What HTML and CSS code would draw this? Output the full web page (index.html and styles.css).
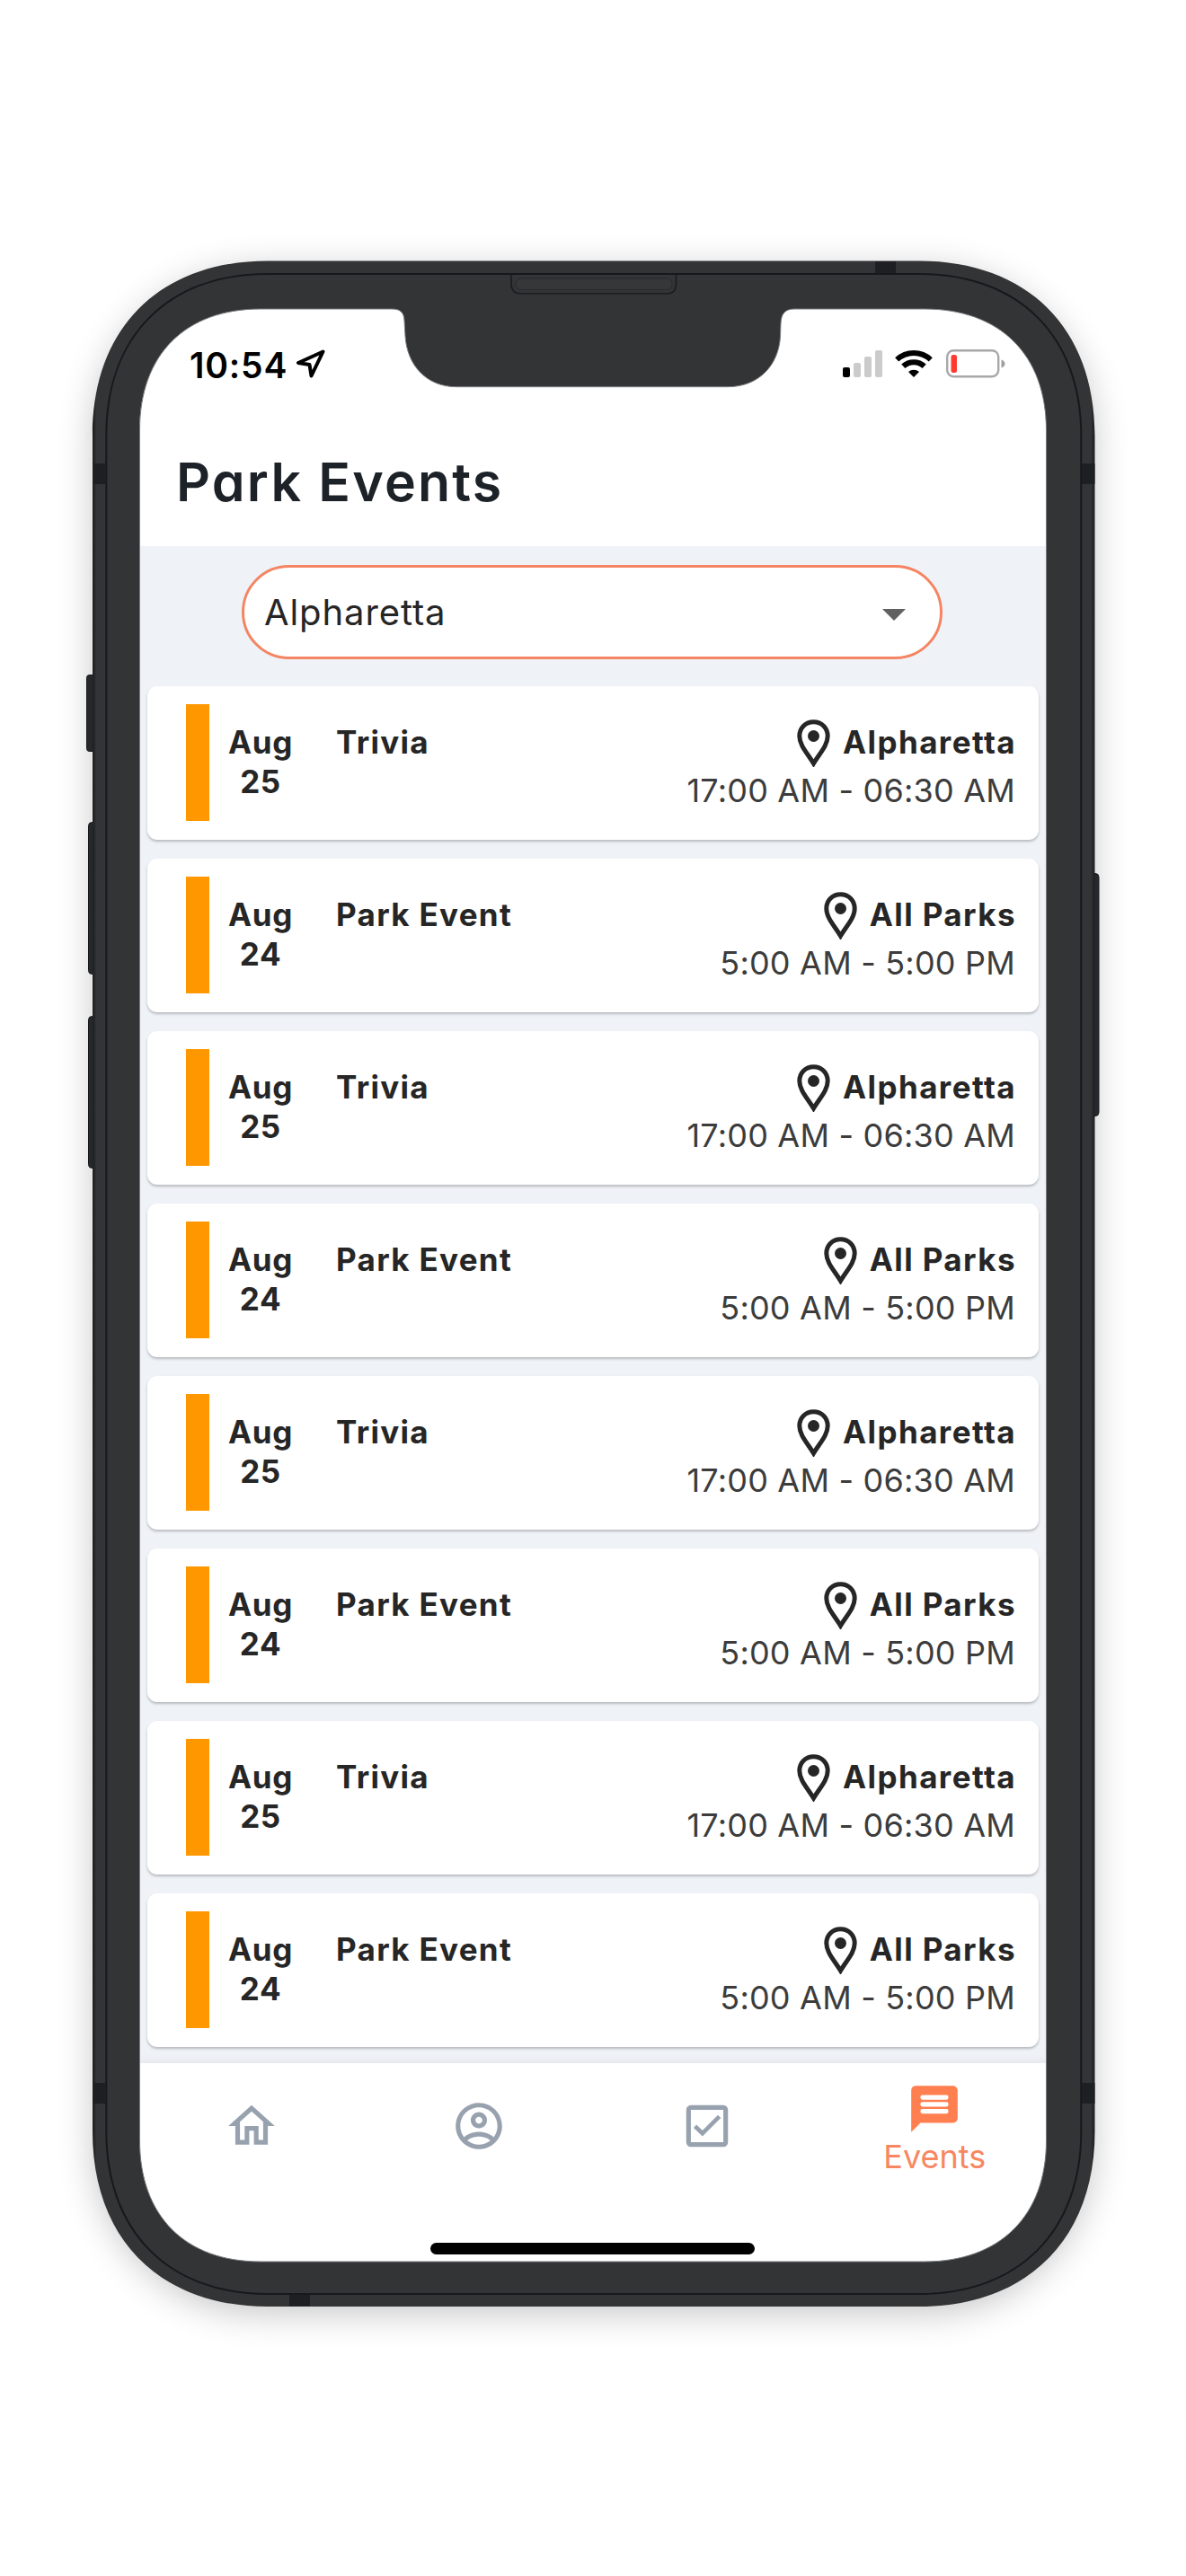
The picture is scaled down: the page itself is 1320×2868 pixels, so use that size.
FILE: index.html
```html
<!DOCTYPE html>
<html lang="en">
  <head>
    <meta charset="UTF-8" />
    <meta name="viewport" content="width=device-width, initial-scale=1.0" />
    <title>Park Events</title>
    <link rel="stylesheet" href="styles.css">
  </head>
  <body>
    <div class="stage">
      <div class="phone-shadow"></div>

      <main class="screen">
        <!-- Status bar -->
        <div class="status-bar">
          <span class="time">10:54</span>
          <svg class="location" viewBox="0 0 32 32">
            <path d="M29.500 2.500 L2 15 L14.500 17 L16.500 29.500 Z" fill="none" stroke="#000" stroke-width="4" stroke-linejoin="round" />
          </svg>
          <div class="signal">
            <i class="on"></i><i></i><i></i><i></i>
          </div>
          <svg class="wifi" viewBox="0 0 42 32">
            <g fill="none" stroke="#000" stroke-width="6">
              <path d="M2.200 11.400 A27.500 27.500 0 0 1 39.800 11.400" />
              <path d="M9.300 18.800 A17 17 0 0 1 32.700 18.800" />
            </g>
            <path d="M15 25 A9 9 0 0 1 27 25 L21 31 Z" />
          </svg>
          <svg class="battery" viewBox="0 0 66 32">
            <rect x="1.200" y="1.200" width="57" height="29" rx="7" fill="none" stroke="#a8a8a8" stroke-width="2.400" />
            <rect x="5.500" y="6" width="6.500" height="20" rx="2.500" fill="#ff3b30" />
            <path d="M61.500 11.500 Q65.500 13 65.500 16 Q65.500 19 61.500 20.500 Z" fill="#a0a0a0" />
          </svg>
        </div>

        <header class="app-bar">
          <h1>Park Events</h1>
        </header>

        <section class="content">
          <div class="park-select">
            <span>Alpharetta</span>
            <svg class="caret" viewBox="0 0 26 13"><path d="M0 0h26L13 13z" /></svg>
          </div>
          <div class="event-list" id="event-list"></div>
        </section>

        <!-- Bottom navigation -->
        <nav class="nav-bar">
          <div class="nav-item">
            <svg viewBox="0 0 24 24"><path d="M12 5.690l5 4.500V18h-2v-6H9v6H7v-7.810l5-4.500M12 3L2 12h3v8h6v-6h2v6h6v-8h3L12 3z" /></svg>
          </div>
          <div class="nav-item">
            <svg viewBox="0 0 24 24"><path d="M12 2C6.480 2 2 6.480 2 12s4.480 10 10 10 10-4.480 10-10S17.520 2 12 2zM7.070 18.280c.43-.9 3.050-1.780 4.930-1.780s4.510.88 4.930 1.780C15.570 19.360 13.860 20 12 20s-3.570-.64-4.930-1.720zm11.290-1.450c-1.430-1.740-4.900-2.330-6.360-2.330s-4.930.59-6.360 2.330C4.620 15.490 4 13.820 4 12c0-4.410 3.590-8 8-8s8 3.590 8 8c0 1.820-.62 3.490-1.640 4.830zM12 6c-1.940 0-3.500 1.560-3.500 3.500S10.060 13 12 13s3.500-1.560 3.500-3.500S13.940 6 12 6zm0 5c-.83 0-1.500-.67-1.500-1.500S11.170 8 12 8s1.500.67 1.500 1.500S12.830 11 12 11z" /></svg>
          </div>
          <div class="nav-item">
            <svg viewBox="0 0 24 24">
              <g fill="none" stroke="#98a2af" stroke-width="2">
                <rect x="4" y="4" width="16" height="16" rx="1" />
                <path stroke-width="1.800" d="M6.800 12.100 L10 15.200 L17.300 7.900" />
              </g>
            </svg>
          </div>
          <div class="nav-item active">
            <svg viewBox="0 0 24 24">
              <path d="M20 2H4c-1.100 0-1.990.9-1.990 2L2 22l4-4h14c1.100 0 2-.9 2-2V4c0-1.100-.9-2-2-2z" />
              <g fill="#fff">
                <rect x="6" y="6" width="12" height="2" rx=".8" />
                <rect x="6" y="9" width="12" height="2" rx=".8" />
                <rect x="6" y="12" width="12" height="2" rx=".8" />
              </g>
            </svg>
            <span>Events</span>
          </div>
        </nav>
        <div class="home-indicator"></div>
      </main>

      <!-- Phone frame, lies over the screen -->
      <svg class="device" viewBox="0 0 1320 2868">
        <defs>
          <linearGradient id="rim" x1="0" x2="1" y1="0" y2="0">
            <stop offset="0" stop-color="#1c1d20" />
            <stop offset=".004" stop-color="#333436" />
            <stop offset=".996" stop-color="#333436" />
            <stop offset="1" stop-color="#1c1d20" />
          </linearGradient>
        </defs>
        <!-- side buttons -->
        <g fill="#27282b" stroke="#18191c" stroke-width="1">
          <rect x="96.500" y="751.500" width="12" height="85" rx="3" />
          <rect x="98.500" y="915.500" width="12" height="169" rx="4" />
          <rect x="98.500" y="1131.500" width="12" height="169" rx="4" />
          <rect x="1211" y="972.500" width="12" height="270" rx="4" />
        </g>
        <!-- body with the screen and notch cut out -->
        <path fill="url(#rim)" fill-rule="evenodd" d="M103 485 C103 365 178 290.500 298 290.500 H1023 C1143 290.500 1218.500 365 1218.500 485 V2373 C1218.500 2493 1143 2568 1023 2568 H298 C178 2568 103 2493 103 2373 Z
          M155.500 479 C155.500 395 206 344 290 344 H436 C446 344 449.500 348 450 357 L451 374 C453 407 475 430.700 508 430.700 H810 C844 430.700 867 407 868.500 374 L869 360 C869.500 349 874 344 884 344 H1029 C1113 344 1164.500 395 1164.500 479 V2383 C1164.500 2467 1113 2518 1029 2518 H290 C206 2518 155.500 2467 155.500 2383 Z" />
        <path fill="none" stroke="#7c7d80" stroke-width="1" d="M155.500 479 C155.500 395 206 344 290 344 H436 C446 344 449.500 348 450 357 L451 374 C453 407 475 430.700 508 430.700 H810 C844 430.700 867 407 868.500 374 L869 360 C869.500 349 874 344 884 344 H1029 C1113 344 1164.500 395 1164.500 479 V2383 C1164.500 2467 1113 2518 1029 2518 H290 C206 2518 155.500 2467 155.500 2383 Z" />
        <path fill="none" stroke="#17181b" stroke-width="2" d="M118.300 485 C118.300 374 187 305 298 305 H1023 C1134 305 1203.300 374 1203.300 485 V2373 C1203.300 2484 1134 2554 1023 2554 H298 C187 2554 118.300 2484 118.300 2373 Z" />
        <!-- antenna bands -->
        <g fill="#1e1f22">
          <rect x="103" y="516" width="15" height="23" />
          <rect x="1204" y="516" width="14.500" height="23" />
          <rect x="974" y="291" width="23" height="13" />
          <rect x="103" y="2319" width="15" height="23" />
          <rect x="1204" y="2319" width="14.500" height="23" />
          <rect x="322" y="2555" width="23" height="12.500" />
        </g>
        <!-- speaker -->
        <path fill="none" stroke="#1b1c1f" stroke-width="1.600" d="M569 305 V316 Q569 327 580 327 H742 Q752.500 327 752.500 316 V305" />
        <rect x="574" y="310" width="174" height="12.500" rx="6" fill="#363739" stroke="#28292b" />
      </svg>
    </div>

    <script>
      const events = [
        { month: "Aug", day: "25", name: "Trivia", park: "Alpharetta", start: "17:00 AM", end: "06:30 AM" },
        { month: "Aug", day: "24", name: "Park Event", park: "All Parks", start: "5:00 AM", end: "5:00 PM" },
      ];
      const list = document.getElementById("event-list");
      // the feed repeats both events four times
      list.innerHTML = [...events, ...events, ...events, ...events]
        .map((item) => {
          return `
          <article class="card">
            <div class="marker"></div>
            <div class="date">${item.month}<br>${item.day}</div>
            <div class="name">${item.name}</div>
            <div class="info">
              <div class="park">
                <svg class="pin" viewBox="0 0 37 53">
                  <path d="M18.500 2.800 C9.500 2.800 2.800 9.500 2.800 18.500 C2.800 29 12 38 18.500 49 C25 38 34.200 29 34.200 18.500 C34.200 9.500 27.500 2.800 18.500 2.800 Z" fill="none" stroke="#262626" stroke-width="5" />
                  <circle cx="18.500" cy="18.500" r="6.500" fill="#262626" />
                </svg>
                <span>${item.park}</span>
              </div>
              <div class="hours">${item.start} <span class="dash">-</span> ${item.end}</div>
            </div>
          </article>`;
        })
        .join("");
    </script>
  </body>
</html>
```
FILE: styles.css
```css
* {
  box-sizing: border-box;
}
body {
  margin: 0;
  background: #fff;
  font-family: Inter, "Liberation Sans", sans-serif;
  color: #262626;
}
svg {
  display: block;
}
.stage {
  position: relative;
  width: 1320px;
  height: 2868px;
  padding: 344px 155px 0;
  overflow: hidden;
}
.phone-shadow {
  position: absolute;
  left: 105px;
  top: 293px;
  width: 1111px;
  height: 2273px;
  border-radius: 185px;
  box-shadow: 0 8px 40px rgba(0, 0, 0, 0.24);
}
.device {
  position: absolute;
  left: 0;
  top: 0;
  width: 1320px;
  height: 2868px;
}
.screen {
  position: relative;
  display: flex;
  flex-direction: column;
  width: 1010px;
  height: 2174px;
  border-radius: 110px;
  overflow: hidden;
  background: #fff;
}

/* status bar */
.status-bar {
  display: flex;
  align-items: flex-end;
  height: 77px;
  padding-left: 56px;
  flex-shrink: 0;
}
.time {
  width: 119px;
  font-size: 39px;
  font-weight: 600;
  line-height: 28px;
  letter-spacing: 0.8px;
  color: #000;
}
.location {
  width: 32px;
  height: 32px;
}
.signal {
  display: flex;
  align-items: flex-end;
  gap: 4px;
  margin-left: 576px;
  padding-bottom: 1px;
}
.signal i {
  width: 8px;
  height: 16px;
  border-radius: 2px;
  background: #cbcbcb;
}
.signal i.on {
  height: 11px;
  background: #000;
}
.signal i:nth-child(3) {
  height: 23px;
}
.signal i:nth-child(4) {
  height: 30px;
}
.wifi {
  width: 42px;
  height: 32px;
  margin-left: 14px;
}
.battery {
  width: 66px;
  height: 32px;
  margin-left: 15px;
}

/* title */
.app-bar {
  height: 187px;
  padding: 80px 0 0 41px;
  flex-shrink: 0;
}
.app-bar h1 {
  margin: 0;
  font-size: 59px;
  line-height: 72px;
  font-weight: 600;
  letter-spacing: 2.2px;
  font-feature-settings: "cv11";
  color: #1d2228;
}

.content {
  flex: 1;
  padding: 21px 9px 0;
  background: #eff3f8;
}
.park-select {
  display: flex;
  align-items: center;
  justify-content: space-between;
  width: 780px;
  height: 105px;
  margin: 0 auto 30px 105px;
  padding: 0 38px 0 22px;
  border: 3px solid #f58462;
  border-radius: 53px;
  background: #fff;
  font-size: 40px;
  letter-spacing: 0.9px;
}
.caret {
  width: 26px;
  height: 13px;
  margin-top: 6px;
  fill: #616161;
}

/* event cards */
.event-list {
  display: flex;
  flex-direction: column;
  gap: 21px;
}
.card {
  display: flex;
  height: 171px;
  padding: 20px 26px 0 43px;
  border-radius: 11px;
  background: #fff;
  box-shadow: 0 2px 3px rgba(0, 0, 0, 0.24);
}
.marker {
  width: 26px;
  height: 130px;
  background: #ff9800;
}
.date {
  width: 72px;
  margin: 20px 0 0 21px;
  text-align: center;
}
.date,
.name,
.park {
  font-size: 35px;
  line-height: 44px;
  font-weight: 650;
}
.date {
  letter-spacing: 0.6px;
}
.name {
  margin: 20px 0 0 48px;
  letter-spacing: 1.3px;
}
.info {
  margin-left: auto;
  text-align: right;
}
.park {
  display: flex;
  justify-content: flex-end;
  gap: 14px;
  padding-top: 17px;
  letter-spacing: 1.4px;
}
.park span {
  margin-right: -1px;
  padding-top: 3px;
}
.pin {
  width: 37px;
  height: 53px;
}
.hours {
  margin-top: 4px;
  font-size: 36px;
  line-height: 44px;
  letter-spacing: 0.2px;
  color: #3c3c3c;
}
.dash {
  font-feature-settings: "calt" 0;
}

/* bottom navigation */
.nav-bar {
  display: flex;
  height: 221px;
  margin: 0 -2px;
  flex-shrink: 0;
  box-shadow: 0 0 12px rgba(0, 0, 0, 0.08);
  background: #fff;
}
.nav-item {
  flex: 1;
  display: flex;
  flex-direction: column;
  align-items: center;
  padding-top: 39px;
  font-size: 36px;
  line-height: 44px;
}
.nav-item svg {
  width: 62px;
  height: 62px;
  fill: #98a2af;
}
.nav-item.active {
  padding-top: 20px;
  color: #f88660;
}
.nav-item.active svg {
  fill: #ff7f50;
}
.home-indicator {
  position: absolute;
  left: 324px;
  bottom: 8px;
  width: 361px;
  height: 13px;
  border-radius: 7px;
  background: #000;
}
```
